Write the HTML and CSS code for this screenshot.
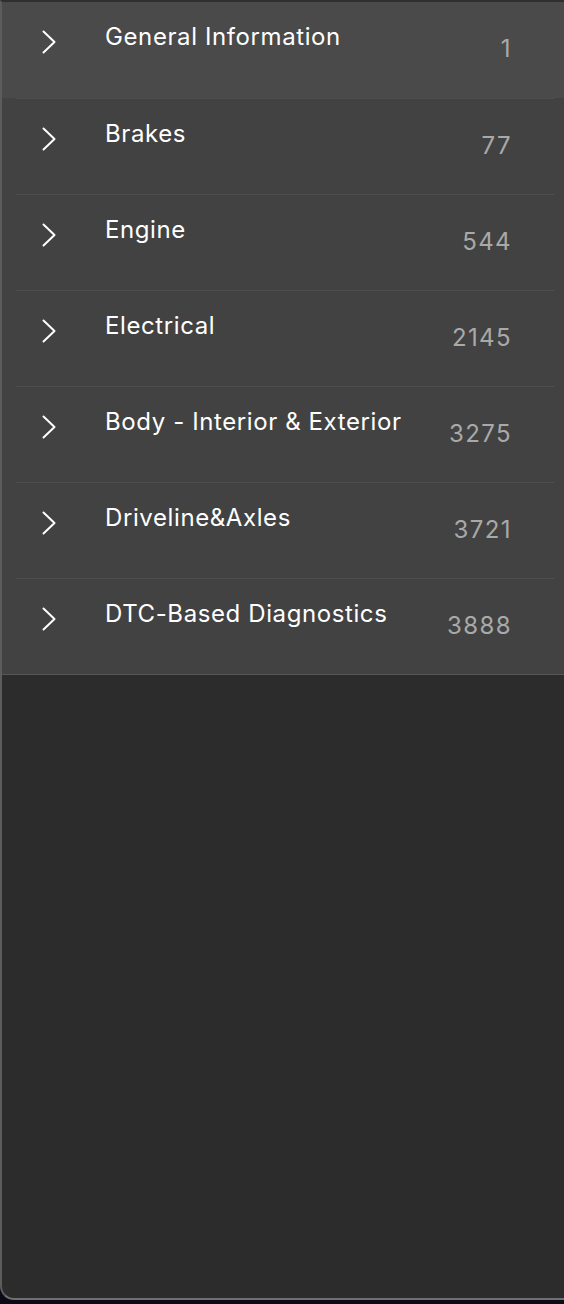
FILE: index.html
```html
<!DOCTYPE html>
<html lang="en">
<head>
<meta charset="utf-8">
<link rel="stylesheet" href="styles.css">
</head>
<body>
<div class="window">
  <ul class="list">
    <li class="row active">
      <svg class="chev" viewBox="0 0 16 24" width="16" height="24"><path d="M2.5 1.5 L13.5 12 L2.5 22.5" fill="none" stroke="#fff" stroke-width="2" stroke-linecap="round" stroke-linejoin="round"/></svg>
      <span class="title">General Information</span>
      <span class="count">1</span>
    </li>
    <li class="row">
      <svg class="chev" viewBox="0 0 16 24" width="16" height="24"><path d="M2.5 1.5 L13.5 12 L2.5 22.5" fill="none" stroke="#fff" stroke-width="2" stroke-linecap="round" stroke-linejoin="round"/></svg>
      <span class="title">Brakes</span>
      <span class="count">77</span>
    </li>
    <li class="row">
      <svg class="chev" viewBox="0 0 16 24" width="16" height="24"><path d="M2.5 1.5 L13.5 12 L2.5 22.5" fill="none" stroke="#fff" stroke-width="2" stroke-linecap="round" stroke-linejoin="round"/></svg>
      <span class="title">Engine</span>
      <span class="count">544</span>
    </li>
    <li class="row">
      <svg class="chev" viewBox="0 0 16 24" width="16" height="24"><path d="M2.5 1.5 L13.5 12 L2.5 22.5" fill="none" stroke="#fff" stroke-width="2" stroke-linecap="round" stroke-linejoin="round"/></svg>
      <span class="title">Electrical</span>
      <span class="count">2145</span>
    </li>
    <li class="row">
      <svg class="chev" viewBox="0 0 16 24" width="16" height="24"><path d="M2.5 1.5 L13.5 12 L2.5 22.5" fill="none" stroke="#fff" stroke-width="2" stroke-linecap="round" stroke-linejoin="round"/></svg>
      <span class="title">Body - Interior &amp; Exterior</span>
      <span class="count">3275</span>
    </li>
    <li class="row">
      <svg class="chev" viewBox="0 0 16 24" width="16" height="24"><path d="M2.5 1.5 L13.5 12 L2.5 22.5" fill="none" stroke="#fff" stroke-width="2" stroke-linecap="round" stroke-linejoin="round"/></svg>
      <span class="title">Driveline&amp;Axles</span>
      <span class="count">3721</span>
    </li>
    <li class="row">
      <svg class="chev" viewBox="0 0 16 24" width="16" height="24"><path d="M2.5 1.5 L13.5 12 L2.5 22.5" fill="none" stroke="#fff" stroke-width="2" stroke-linecap="round" stroke-linejoin="round"/></svg>
      <span class="title">DTC-Based Diagnostics</span>
      <span class="count">3888</span>
    </li>
  </ul>
</div>
</body>
</html>
```
FILE: styles.css
```css
html, body {
  margin: 0;
  padding: 0;
  background: #0c0a16;
}
body {
  font-family: Inter, "Noto Sans", sans-serif;
}
.window {
  box-sizing: border-box;
  height: 1300px;
  background: #2c2c2c;
  border-top: 2px solid #2f2f2f;
  border-left: 2px solid #5c5c5c;
  border-bottom: 2px solid #707070;
  border-bottom-left-radius: 14px;
  overflow: hidden;
}
.list {
  list-style: none;
  margin: 0;
  padding: 0;
  background: #424242;
  border-bottom: 1px solid #565656;
}
.row {
  height: 96px;
  display: flex;
  align-items: flex-start;
  box-sizing: border-box;
  margin-left: 14px;
  margin-right: 10px;
  border-top: 1px solid #4e4e4e;
}
.row:first-child {
  border-top: none;
}
.row.active {
  margin: 0;
  padding-left: 14px;
  padding-right: 10px;
  background: #4a4a4a;
}
.chev {
  flex: none;
  margin: 28px 0 0 25px;
}
.title {
  flex: 1;
  margin: 20px 0 0 48px;
  font-size: 24px;
  letter-spacing: 0.6px;
  color: #ffffff;
}
.count {
  flex: none;
  margin: 32px 42px 0 0;
  font-size: 24px;
  letter-spacing: 1.4px;
  color: #a9a9a9;
}
```
